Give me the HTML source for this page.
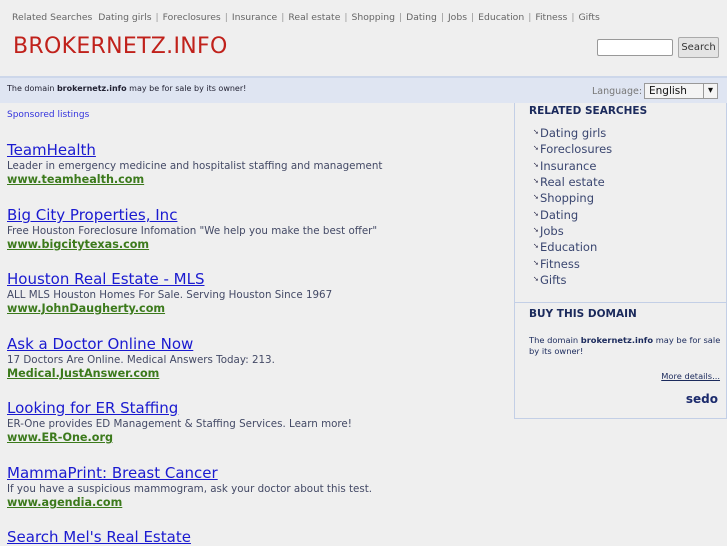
<!DOCTYPE html>
<html><head><meta charset="utf-8"><style>
*{margin:0;padding:0;box-sizing:border-box}
body{width:727px;height:545px;overflow:hidden;background:#efefef;font-family:"DejaVu Sans","Liberation Sans",sans-serif;position:relative}
.top{position:absolute;left:12px;top:12px;font-size:9.25px;color:#666;white-space:nowrap}
.top span.s{color:#999;margin:0 4px}
.logo{position:absolute;left:13px;top:34px;font-size:22px;color:#c0211b;letter-spacing:0.3px}
.sinput{position:absolute;left:597px;top:39px;width:76px;height:17px;border:1px solid #999;background:#fff;border-radius:2px}
.sbtn{position:absolute;left:678px;top:37px;width:41px;height:21px;border:1px solid #aaa;background:#e4e4e4;font-size:10px;color:#333;text-align:center;line-height:19px;border-radius:2px}
.band{position:absolute;left:0;top:76px;width:727px;height:27px;background:#dfe5f2;border-top:2px solid #cdd7ea;font-size:8px;color:#223;padding:6px 7px}
.lang{position:absolute;left:592px;top:86px;font-size:9.5px;color:#777}
.sel{position:absolute;left:644px;top:83px;width:74px;height:16px;border:1px solid #999;background:#f4f4f4;font-size:10.5px;padding-left:4px;line-height:14px;color:#111}
.sel:after{content:"▾";position:absolute;right:0;top:0;width:13px;border-left:1px solid #999;text-align:center;font-size:10px}
.spons{position:absolute;left:7px;top:110px;font-size:9px;color:#3333dd}
.ad{position:absolute;left:7px;white-space:nowrap}
.ad a{display:block;font-size:15px;color:#1a1ad0;text-decoration:underline;line-height:17px}
.ad p{font-size:10.3px;color:#444a66;line-height:14px}
.ad b{display:block;font-size:11.2px;color:#3c7a1c;text-decoration:underline;line-height:14px}
.side{position:absolute;left:514px;top:103px;width:213px;height:316px;border:1px solid #c3cfe6;border-top:none}
.side h3{font-size:10.5px;color:#1b2a5c;font-weight:bold;position:absolute;left:14px}
.side ul{position:absolute;left:18px;top:22px;list-style:none}
.side li{font-size:11.5px;color:#3a4670;height:16.35px;line-height:16.35px;overflow:hidden}
.side li i{display:inline-block;width:7px;font-style:normal;font-size:7px;line-height:10px;vertical-align:top;margin-top:2px;color:#224}
.hr{position:absolute;left:0;top:199px;width:212px;border-top:1px solid #c3cfe6}
.btxt{position:absolute;left:14px;top:232px;font-size:8.3px;color:#1b2a5c;line-height:11px;width:195px}
.more{position:absolute;right:6px;top:268px;font-size:8.3px;color:#1b2a5c;text-decoration:underline}
.sedo{position:absolute;right:8px;top:289px;font-size:12px;font-weight:bold;color:#1b2a6c}
</style></head><body>
<div class="top">Related Searches &nbsp;Dating girls<span class="s">|</span>Foreclosures<span class="s">|</span>Insurance<span class="s">|</span>Real estate<span class="s">|</span>Shopping<span class="s">|</span>Dating<span class="s">|</span>Jobs<span class="s">|</span>Education<span class="s">|</span>Fitness<span class="s">|</span>Gifts</div>
<div class="logo">BROKERNETZ.INFO</div>
<div class="sinput"></div><div class="sbtn">Search</div>
<div class="band">The domain <b>brokernetz.info</b> may be for sale by its owner!</div>
<div class="lang">Language:</div><div class="sel">English</div>
<div class="spons">Sponsored listings</div>
<div class="ad" style="top:142px"><a>TeamHealth</a><p>Leader in emergency medicine and hospitalist staffing and management</p><b>www.teamhealth.com</b></div>
<div class="ad" style="top:207px"><a>Big City Properties, Inc</a><p>Free Houston Foreclosure Infomation "We help you make the best offer"</p><b>www.bigcitytexas.com</b></div>
<div class="ad" style="top:271px"><a>Houston Real Estate - MLS</a><p>ALL MLS Houston Homes For Sale. Serving Houston Since 1967</p><b>www.JohnDaugherty.com</b></div>
<div class="ad" style="top:336px"><a>Ask a Doctor Online Now</a><p>17 Doctors Are Online. Medical Answers Today: 213.</p><b>Medical.JustAnswer.com</b></div>
<div class="ad" style="top:400px"><a>Looking for ER Staffing</a><p>ER-One provides ED Management &amp; Staffing Services. Learn more!</p><b>www.ER-One.org</b></div>
<div class="ad" style="top:465px"><a>MammaPrint: Breast Cancer</a><p>If you have a suspicious mammogram, ask your doctor about this test.</p><b>www.agendia.com</b></div>
<div class="ad" style="top:529px"><a>Search Mel's Real Estate</a></div>
<div class="side">
<h3 style="top:2px">RELATED SEARCHES</h3>
<ul><li><i>➘</i>Dating girls</li><li><i>➘</i>Foreclosures</li><li><i>➘</i>Insurance</li><li><i>➘</i>Real estate</li><li><i>➘</i>Shopping</li><li><i>➘</i>Dating</li><li><i>➘</i>Jobs</li><li><i>➘</i>Education</li><li><i>➘</i>Fitness</li><li><i>➘</i>Gifts</li></ul>
<div class="hr"></div>
<h3 style="top:205px">BUY THIS DOMAIN</h3>
<div class="btxt">The domain <b>brokernetz.info</b> may be for sale by its owner!</div>
<div class="more">More details...</div>
<div class="sedo">sedo</div>
</div>
</body></html>
